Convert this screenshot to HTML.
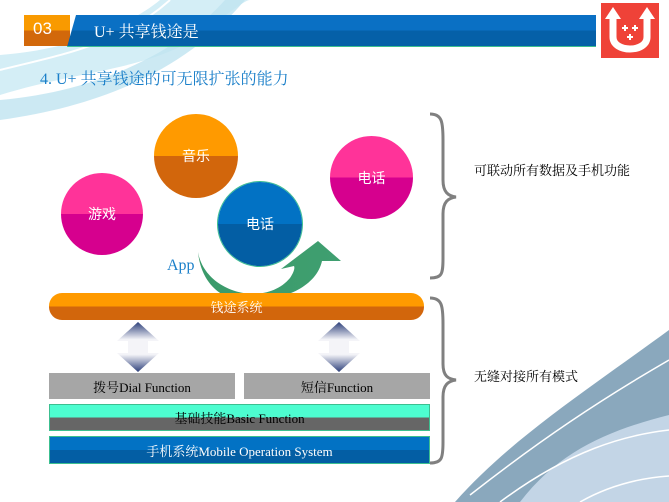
<!DOCTYPE html>
<html><head><meta charset="utf-8"><style>
body{margin:0;width:669px;height:502px;overflow:hidden;background:#fff;position:relative;font-family:"Liberation Serif","Noto Serif CJK SC",serif}
.a{position:absolute}
.c{position:absolute;border-radius:50%;color:#fff;font-size:14px;display:flex;align-items:center;justify-content:center;font-family:"Liberation Sans","Noto Sans CJK SC",sans-serif}
.t{font-family:"Liberation Serif","Noto Serif CJK SC",serif;font-size:13px;display:flex;align-items:center;justify-content:center}
</style></head><body>
<svg class="a" style="left:0;top:0" width="669" height="502">
<path d="M0 95 C80 70 150 70 200 35 C230 12 245 0 250 0 L160 0 C130 25 70 50 0 55Z" fill="#d4eef6"/>
<path d="M0 120 C110 105 190 65 245 0 L225 0 C185 45 110 90 0 100Z" fill="#bfe4f0" opacity=".8"/>
<path d="M0 70 C60 55 120 45 170 0" stroke="#fff" stroke-width="2" fill="none"/>
<path d="M455 502 C510 440 580 395 669 330 L669 502Z" fill="#8aa8bd"/>
<path d="M520 502 C560 450 610 430 669 415 L669 502Z" fill="#c3d5e6"/>
<path d="M470 495 C540 440 600 400 669 360" stroke="#fff" stroke-width="1.5" fill="none"/>
<path d="M500 502 C570 450 625 435 669 430" stroke="#fff" stroke-width="1.5" fill="none"/>
<path d="M580 502 C610 485 640 478 669 476" stroke="#fff" stroke-width="1.5" fill="none"/>
<path d="M430 114 C442 114 443 122 443 140 L443 180 C443 192 448 196 456 197 C448 198 443 202 443 214 L443 258 C443 274 442 278 430 278" stroke="#808080" stroke-width="3" fill="none"/>
<path d="M430 298 C442 298 443 306 443 324 L443 364 C443 376 448 379 456 380 C448 381 443 385 443 397 L443 442 C443 458 442 463 430 463" stroke="#808080" stroke-width="3" fill="none"/>
<defs><linearGradient id="g" x1="0" y1="0" x2="0" y2="1"><stop offset="0" stop-color="#2c3f7a"/><stop offset=".35" stop-color="#f4f4f8"/><stop offset=".65" stop-color="#f4f4f8"/><stop offset="1" stop-color="#2c3f7a"/></linearGradient>
<linearGradient id="gr" x1="0" y1="0" x2="1" y2="0"><stop offset="0" stop-color="#3a9a6a"/><stop offset="1" stop-color="#3f9f70"/></linearGradient></defs>
<path d="M138 322 L159 341 L148 341 L148 353 L159 353 L138 372 L117 353 L128 353 L128 341 L117 341Z" fill="url(#g)"/>
<path d="M339 322 L360 341 L349 341 L349 353 L360 353 L339 372 L318 353 L329 353 L329 341 L318 341Z" fill="url(#g)"/>
</svg>
<div class="a" style="left:24px;top:15px;width:46px;height:31px;background:linear-gradient(#f99a00 50%,#d2680b 50%);color:#fff;font-size:17px;font-family:'Liberation Sans',sans-serif;line-height:28px;padding-left:9px;box-sizing:border-box">03</div>
<div class="a" style="left:64px;top:15px;width:532px;height:31px;background:linear-gradient(#0a70c4 50%,#0560a8 50%);clip-path:polygon(12px 0,100% 0,100% 100%,3px 100%);border-bottom:1px solid #3cbf90"></div>
<div class="a" style="left:94px;top:19px;color:#fff;font-size:16px">U+ 共享钱途是</div>
<svg class="a" style="left:601px;top:3px" width="58" height="55"><rect width="58" height="55" fill="#ef4238"/>
<path d="M12 14 L12 34 C12 50 46 50 46 34 L46 14" stroke="#fff" stroke-width="7" fill="none"/>
<path d="M4 16 L12 4 L20 16Z M38 16 L46 4 L54 16Z" fill="#fff"/>
<path d="M21 25h6M24 22v6M31 25h6M34 22v6M26 34h6M29 31v6" stroke="#fff" stroke-width="2"/></svg>
<div class="a" style="left:40px;top:66px;color:#1a7fc9;font-size:16px">4. U+ 共享钱途的可无限扩张的能力</div>
<div class="c" style="left:61px;top:173px;width:82px;height:82px;background:linear-gradient(#ff3399 50%,#d6008e 50%)">游戏</div>
<div class="c" style="left:154px;top:114px;width:84px;height:84px;background:linear-gradient(#ff9a00 50%,#d2660c 50%)">音乐</div>
<div class="c" style="left:330px;top:136px;width:83px;height:83px;background:linear-gradient(#ff3399 50%,#d6008e 50%)">电话</div>
<div class="c" style="left:218px;top:182px;width:84px;height:84px;background:linear-gradient(#0272c4 50%,#035ea4 50%);box-shadow:0 0 0 1px #3cbf90">电话</div>
<svg class="a" style="left:195px;top:238px" width="150" height="66"><path d="M3 14 C10 55 70 70 95 40 C99 34 100 30 99 28 L86 31 L123 3 L146 23 L127 23 C120 55 70 70 30 58 C15 50 5 35 3 14Z" fill="url(#gr)"/></svg>
<div class="a" style="left:167px;top:257px;color:#1a7fc9;font-size:16px">App</div>
<div class="a t" style="left:49px;top:293px;width:375px;height:27px;border-radius:13px;background:linear-gradient(#ff9a00 50%,#d2660c 50%);color:#fff">钱途系统</div>
<div class="a t" style="left:49px;top:373px;width:186px;height:26px;background:#a6a6a6;color:#000">拨号Dial Function</div>
<div class="a t" style="left:244px;top:373px;width:186px;height:26px;background:#a6a6a6;color:#000">短信Function</div>
<div class="a t" style="left:49px;top:404px;width:381px;height:27px;background:linear-gradient(#4dfdd0 50%,#666 50%);box-shadow:inset 0 0 0 1px #3cbf90;color:#000">基础技能Basic Function</div>
<div class="a t" style="left:49px;top:436px;width:381px;height:28px;background:linear-gradient(#0272c4 50%,#035ea4 50%);box-shadow:inset 0 0 0 1px #3cbf90;color:#fff">手机系统Mobile Operation System</div>
<div class="a" style="left:474px;top:160px;font-size:13px">可联动所有数据及手机功能</div>
<div class="a" style="left:474px;top:366px;font-size:13px">无缝对接所有模式</div>
</body></html>
